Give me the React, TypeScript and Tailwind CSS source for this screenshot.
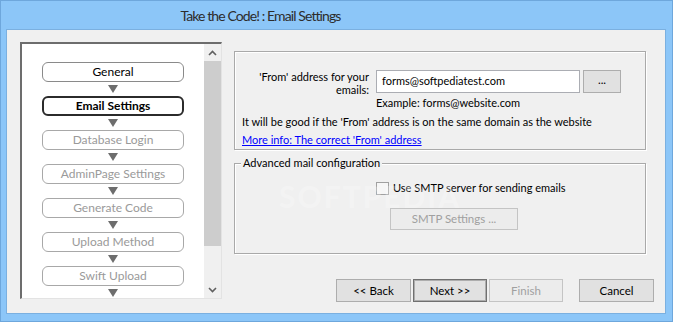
import React from "react";

const steps = [
  { label: "General", state: "done" },
  { label: "Email Settings", state: "current" },
  { label: "Database Login", state: "todo" },
  { label: "AdminPage Settings", state: "todo" },
  { label: "Generate Code", state: "todo" },
  { label: "Upload Method", state: "todo" },
  { label: "Swift Upload", state: "todo" },
];

function Arrow() {
  return (
    <div className="flex h-[14px] items-center justify-center">
      <svg width="10" height="8" viewBox="0 0 10 8">
        <polygon points="0,0 10,0 5,8" fill="#6d6d6d" />
      </svg>
    </div>
  );
}

function StepBox({ label, state }: { label: string; state: string }) {
  if (state === "current") {
    return (
      <div className="flex h-[20px] items-center justify-center rounded-[6px] border-2 border-[#2b2b2b] bg-white text-[12px] font-bold text-black">
        {label}
      </div>
    );
  }
  return (
    <div
      className={
        "flex h-[20px] items-center justify-center rounded-[6px] border bg-white text-[12px] " +
        (state === "done" ? "border-[#8a8a8a] text-black" : "border-[#a8a8a8] text-[#9a9a9a]")
      }
    >
      {label}
    </div>
  );
}

function WinButton({
  children,
  disabled,
  primary,
  className,
}: {
  children: React.ReactNode;
  disabled?: boolean;
  primary?: boolean;
  className?: string;
}) {
  return (
    <div
      className={
        "flex shrink-0 items-center justify-center border bg-[#e1e1e1] text-[11.5px] " +
        (primary ? "border-[#707070] shadow-[inset_0_0_0_1px_#adadad] " : "border-[#adadad] ") +
        (disabled ? "text-[#a0a0a0] bg-[#ececec] border-[#c4c4c4] " : "text-black ") +
        (className ?? "")
      }
    >
      {children}
    </div>
  );
}

export default function App() {
  return (
    <div
      className="flex h-[322px] w-[673px] flex-col border border-[#6ea7dc] bg-[#8cc6f8] text-[11px] text-black"
      style={{ fontFamily: 'Lato, "Noto Sans", sans-serif' }}
    >
      {/* title bar */}
      <div className="flex h-[28px] items-center justify-center pr-[152px] text-[14px] tracking-[-0.9px] text-[#2c2c2c]">
        Take the Code! : Email Settings
      </div>

      {/* client area */}
      <div className="relative mb-[7px] ml-[5px] mr-[6px] flex flex-1 border border-[#7bb0e0] bg-[#f0f0f0] pl-[13px] pt-[12px]">
        {/* step list */}
        <div className="flex h-[257px] w-[202px] shrink-0 border-l-2 border-t-2 border-b border-r border-l-[#6d6d6d] border-t-[#6d6d6d] border-b-[#e3e3e3] border-r-[#e3e3e3] bg-white">
          <div className="flex flex-1 flex-col px-[20px] pt-[18px]">
            {steps.map((s) => (
              <div key={s.label}>
                <StepBox label={s.label} state={s.state} />
                <Arrow />
              </div>
            ))}
          </div>
          <div className="flex w-[17px] flex-col bg-[#f0f0f0]">
            <div className="flex h-[17px] items-center justify-center">
              <svg width="9" height="6" viewBox="0 0 9 6">
                <polyline points="1,5 4.5,1.5 8,5" fill="none" stroke="#606060" strokeWidth="1.6" />
              </svg>
            </div>
            <div className="h-[185px] bg-[#cdcdcd]" />
            <div className="flex-1" />
            <div className="flex h-[17px] items-center justify-center">
              <svg width="9" height="6" viewBox="0 0 9 6">
                <polyline points="1,1 4.5,4.5 8,1" fill="none" stroke="#606060" strokeWidth="1.6" />
              </svg>
            </div>
          </div>
        </div>

        {/* right side */}
        <div className="ml-[12px] flex w-[412px] shrink-0 flex-col pt-[9px]">
          <div className="flex h-[99px] flex-col border border-[#a9a9a9] shadow-[inset_1px_1px_0_#fff,1px_1px_0_#fff] pl-[7px] pt-[18px]">
            <div className="flex h-[23px] items-start">
              <div className="w-[134px] shrink-0 pr-[7px] text-right leading-[13px]">
                'From' address for your
                <br />
                emails:
              </div>
              <div className="flex h-[23px] w-[204px] shrink-0 items-center border border-[#abadb3] bg-white px-[5px]">
                forms@softpediatest.com
              </div>
              <WinButton className="ml-[3px] h-[23px] w-[38px] border-[#9a9a9a] pb-[3px]">...</WinButton>
            </div>
            <div className="ml-[134px] mt-[2px] leading-[16px]">Example: forms@website.com</div>
            <div className="mt-[3px] whitespace-nowrap leading-[16px]">
              It will be good if the 'From' address is on the same domain as the website
            </div>
            <div className="mt-[2px] leading-[16px] text-[#0000ff] underline">
              More info: The correct 'From' address
            </div>
          </div>

          <div className="relative mt-[13px] flex h-[91px] flex-col border border-[#a9a9a9] shadow-[inset_1px_1px_0_#fff,1px_1px_0_#fff]">
            <div className="absolute left-[6px] top-[-9px] bg-[#f0f0f0] px-[2px] leading-[16px]">
              Advanced mail configuration
            </div>
            <div className="ml-[141px] mt-[16px] flex items-center">
              <div className="h-[13px] w-[13px] border border-[#a0a0a0] bg-[#f6f6f6]" />
              <span className="ml-[4px]">Use SMTP server for sending emails</span>
            </div>
            <WinButton disabled className="ml-[155px] mt-[11px] h-[22px] w-[128px]">
              SMTP Settings ...
            </WinButton>
          </div>

          <div className="mt-[25px] flex pl-[102px]">
            <WinButton className="h-[23px] w-[75px]">&lt;&lt; Back</WinButton>
            <WinButton primary className="ml-[2px] h-[23px] w-[74px]">
              Next &gt;&gt;
            </WinButton>
            <WinButton disabled className="ml-[2px] h-[23px] w-[74px]">
              Finish
            </WinButton>
            <WinButton className="ml-[16px] h-[23px] w-[75px]">Cancel</WinButton>
          </div>
        </div>

        {/* watermark */}
        <div className="pointer-events-none absolute left-[272px] top-[144px] text-[30px] font-bold tracking-[2px] text-white opacity-25">
          SOFTPEDIA
        </div>
      </div>
    </div>
  );
}
